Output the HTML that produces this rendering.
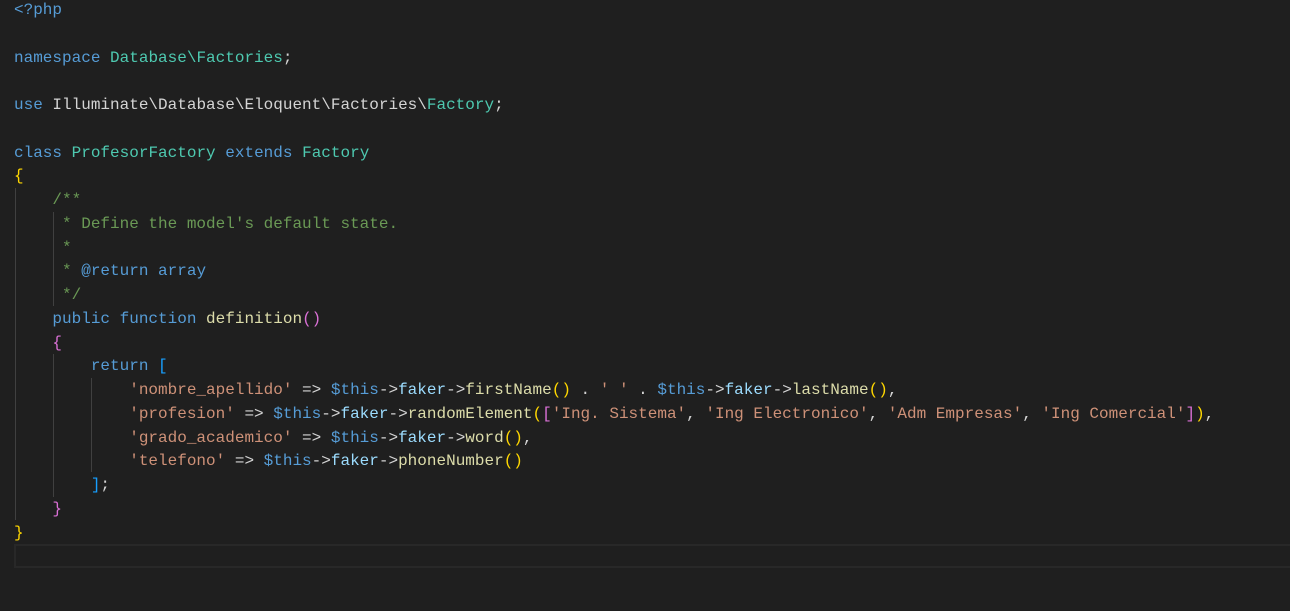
<!DOCTYPE html>
<html><head><meta charset="utf-8"><style>
html,body{margin:0;padding:0;background:#1f1f1f;width:1290px;height:611px;overflow:hidden}
.code{position:absolute;left:14px;top:-1px;font-family:"Liberation Mono",monospace;font-size:16px;line-height:23.75px;color:#d4d4d4;white-space:pre;margin:0}
.k{color:#569cd6}.t{color:#4ec9b0}.c{color:#6a9955}.s{color:#ce9178}.v{color:#9cdcfe}.f{color:#dcdcaa}.d{color:#d4d4d4}
.b1{color:#ffd700}.b2{color:#da70d6}.b3{color:#179fff}
.g{position:absolute;width:1px;background:#404040}
.cur{position:absolute;left:14px;top:544px;width:1290px;height:20px;border:2px solid #282828;border-right:none}
</style></head><body>
<div class="cur"></div>
<div class="g" style="left:15px;top:188px;height:332px"></div>
<div class="g" style="left:53px;top:212px;height:94px"></div>
<div class="g" style="left:53px;top:354px;height:143px"></div>
<div class="g" style="left:91px;top:378px;height:94px"></div>
<pre class="code"><span class="k">&lt;?php</span>

<span class="k">namespace</span> <span class="t">Database\Factories</span>;

<span class="k">use</span> Illuminate\Database\Eloquent\Factories\<span class="t">Factory</span>;

<span class="k">class</span> <span class="t">ProfesorFactory</span> <span class="k">extends</span> <span class="t">Factory</span>
<span class="b1">{</span>
    <span class="c">/**</span>
<span class="c">     * Define the model's default state.</span>
<span class="c">     *</span>
<span class="c">     * </span><span class="k">@return</span> <span class="k">array</span>
<span class="c">     */</span>
    <span class="k">public</span> <span class="k">function</span> <span class="f">definition</span><span class="b2">()</span>
    <span class="b2">{</span>
        <span class="k">return</span> <span class="b3">[</span>
            <span class="s">'nombre_apellido'</span> =&gt; <span class="k">$this</span>-&gt;<span class="v">faker</span>-&gt;<span class="f">firstName</span><span class="b1">()</span> . <span class="s">' '</span> . <span class="k">$this</span>-&gt;<span class="v">faker</span>-&gt;<span class="f">lastName</span><span class="b1">()</span>,
            <span class="s">'profesion'</span> =&gt; <span class="k">$this</span>-&gt;<span class="v">faker</span>-&gt;<span class="f">randomElement</span><span class="b1">(</span><span class="b2">[</span><span class="s">'Ing. Sistema'</span>, <span class="s">'Ing Electronico'</span>, <span class="s">'Adm Empresas'</span>, <span class="s">'Ing Comercial'</span><span class="b2">]</span><span class="b1">)</span>,
            <span class="s">'grado_academico'</span> =&gt; <span class="k">$this</span>-&gt;<span class="v">faker</span>-&gt;<span class="f">word</span><span class="b1">()</span>,
            <span class="s">'telefono'</span> =&gt; <span class="k">$this</span>-&gt;<span class="v">faker</span>-&gt;<span class="f">phoneNumber</span><span class="b1">()</span>
        <span class="b3">]</span>;
    <span class="b2">}</span>
<span class="b1">}</span>
</pre>
</body></html>
